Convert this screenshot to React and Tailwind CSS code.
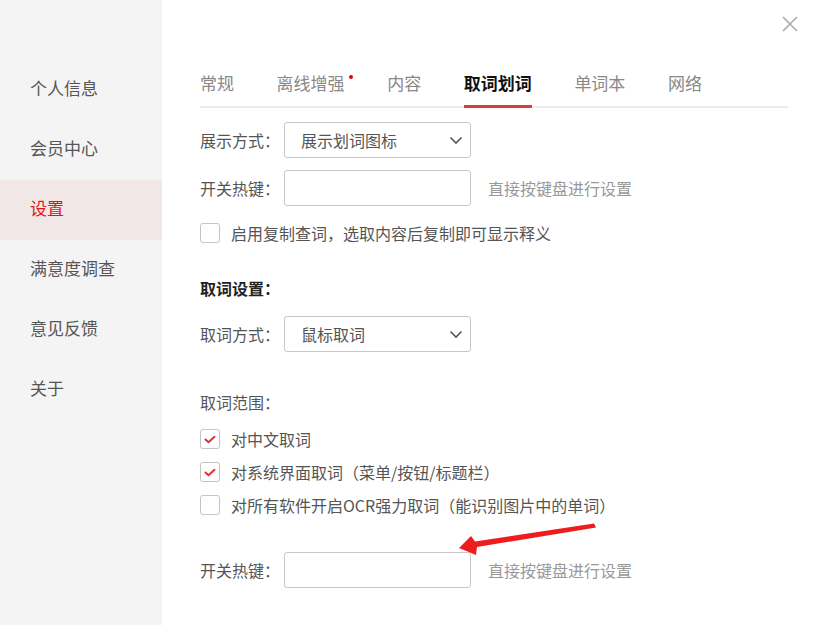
import React from 'react'

const font = { fontFamily: '"Microsoft YaHei", "Noto Sans CJK SC", "Noto Sans", sans-serif' }

const menu = ['个人信息', '会员中心', '设置', '满意度调查', '意见反馈', '关于']
const tabs = ['常规', '离线增强', '内容', '取词划词', '单词本', '网络']

function Chevron() {
  return (
    <svg width="14" height="9" viewBox="0 0 14 9" fill="none">
      <path d="M1.5 1.5 L7 7 L12.5 1.5" stroke="#555" strokeWidth="1.6" />
    </svg>
  )
}

function Select({ value }) {
  return (
    <div className="w-[187px] h-[36px] border border-[#c8c8c8] rounded-[3px] flex items-center justify-between pl-[16px] pr-[7px] text-[16px] text-[#555]">
      <span>{value}</span>
      <Chevron />
    </div>
  )
}

function Checkbox({ checked, label }) {
  return (
    <div className="flex items-center h-[20px]">
      <div className="w-[20px] h-[20px] border border-[#c4c4c4] rounded-[3px] flex items-center justify-center">
        {checked && (
          <svg width="12" height="9" viewBox="0 0 12 9" fill="none">
            <path d="M1.5 4.5 L4.5 7.2 L10.5 1.8" stroke="#e03030" strokeWidth="2" strokeLinecap="round" strokeLinejoin="round" />
          </svg>
        )}
      </div>
      <span className="ml-[11px] text-[16px] text-[#555] whitespace-nowrap">{label}</span>
    </div>
  )
}

function Row({ label, children }) {
  return (
    <div className="flex items-center">
      <span className="w-[84px] text-[16px] text-[#555]">{label}</span>
      {children}
    </div>
  )
}

function Hotkey() {
  return (
    <Row label="开关热键：">
      <div className="w-[187px] h-[36px] border border-[#c8c8c8] rounded-[3px]" />
      <span className="ml-[17px] text-[16px] text-[#999]">直接按键盘进行设置</span>
    </Row>
  )
}

export default function App() {
  return (
    <div className="w-[825px] h-[625px] flex bg-white overflow-hidden" style={font}>
      <div className="w-[162px] bg-[#f4f4f4] pt-[60px] flex flex-col">
        {menu.map((m) => (
          <div
            key={m}
            className={
              m === '设置'
                ? 'h-[60px] flex items-center pl-[30px] pb-[4px] text-[17px] text-[#e01818] bg-[#f1e7e7]'
                : 'h-[60px] flex items-center pl-[30px] pb-[4px] text-[17px] text-[#555]'
            }
          >
            {m}
          </div>
        ))}
      </div>

      <div className="relative flex-1 pl-[38px] pr-[37px] pt-[71px]">
        <button className="absolute top-[16px] right-[27px]">
          <svg width="16" height="16" viewBox="0 0 16 16" fill="none">
            <path d="M1 1 L15 15 M15 1 L1 15" stroke="#a8a8a8" strokeWidth="1.5" />
          </svg>
        </button>

        <div className="flex border-b-2 border-[#ececec] gap-[42.6px]">
          {tabs.map((t) => (
            <div
              key={t}
              className={
                t === '取词划词'
                  ? 'relative text-[17px] leading-[24px] pb-[10px] mb-[-2px] border-b-[3px] border-[#e03a3a] font-bold text-[#111]'
                  : 'relative text-[17px] leading-[24px] pb-[11px] text-[#888]'
              }
            >
              {t}
              {t === '离线增强' && (
                <span className="absolute top-[4px] right-[-8px] w-[4px] h-[4px] rounded-full bg-[#e00000]" />
              )}
            </div>
          ))}
        </div>

        <div className="flex flex-col mt-[14px]">
          <Row label="展示方式：">
            <Select value="展示划词图标" />
          </Row>
          <div className="mt-[12px]">
            <Hotkey />
          </div>
          <div className="mt-[17px]">
            <Checkbox label="启用复制查词，选取内容后复制即可显示释义" />
          </div>
          <div className="mt-[33px] text-[16px] leading-[24px] font-bold text-[#222]">取词设置：</div>
          <div className="mt-[16px]">
            <Row label="取词方式：">
              <Select value="鼠标取词" />
            </Row>
          </div>
          <div className="mt-[38px] text-[16px] leading-[24px] text-[#555]">取词范围：</div>
          <div className="mt-[15px] flex flex-col gap-[13px]">
            <Checkbox checked label="对中文取词" />
            <Checkbox checked label="对系统界面取词（菜单/按钮/标题栏）" />
            <Checkbox label="对所有软件开启OCR强力取词（能识别图片中的单词）" />
          </div>
          <div className="mt-[37px]">
            <Hotkey />
          </div>
        </div>

        <svg className="absolute left-0 top-0 pointer-events-none" width="663" height="625" viewBox="162 0 663 625">
          <polygon points="594,523.5 596,527.5 477,547 476,555 459,548 471,536 475,541.5" fill="#ee1c1c" />
        </svg>
      </div>
    </div>
  )
}
